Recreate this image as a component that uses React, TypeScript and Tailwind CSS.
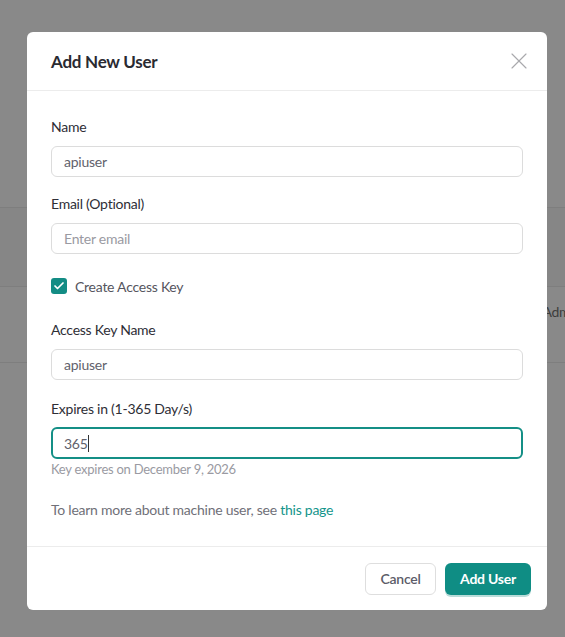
import React from 'react';
import { X, Check } from 'lucide-react';

const Field: React.FC<{ label: string; value?: string; placeholder?: string; focused?: boolean }> = ({ label, value, placeholder, focused }) => (
    <div className="flex flex-col">
        <label className="text-[14px] leading-5 text-[#2e2e36]">{label}</label>
        <div
            className={
                focused
                    ? 'mt-[8px] h-[32px] rounded-md border-2 border-[#148f86] px-[11px] flex items-center'
                    : 'mt-[9px] h-[31px] rounded-md border border-[#dcdcdc] px-3 flex items-center'
            }
        >
            {value ? (
                <span className="text-[14px] text-[#62626c]">
                    {value}
                    {focused && <span className="inline-block w-px h-[17px] bg-[#333] align-middle -mt-[2px]"></span>}
                </span>
            ) : (
                <span className="text-[14px] text-[#9a9aa2]">{placeholder}</span>
            )}
        </div>
    </div>
);

export default function App() {
    return (
        <div className="relative w-[565px] h-[637px] overflow-hidden bg-[#898989] font-['Lato',sans-serif] tracking-[-0.25px]">
            {/* page behind the overlay */}
            <div className="flex flex-col">
                <div className="h-[207px]"></div>
                <div className="h-[79px] border-t border-[#7e7e7e] bg-[#868686]"></div>
                <div className="h-[76px] border-t border-[#7e7e7e] flex items-start justify-end pt-[15px]">
                    <span className="text-[14px] leading-5 text-[#3d3d3d] -mr-[16px]">Admin</span>
                </div>
                <div className="border-t border-[#7e7e7e]"></div>
            </div>

            {/* Modal */}
            <div className="absolute left-[27px] top-[32px] w-[520px] h-[578px] bg-white rounded-md flex flex-col">
                <div className="h-[59px] px-6 flex items-center justify-between border-b border-[#ececec]">
                    <h2 className="text-[17px] font-bold text-[#2a2a31] mt-[1px]">Add New User</h2>
                    <X className="w-[28px] h-[28px] text-[#a9a9ad] -mr-[10px]" strokeWidth={1} />
                </div>

                <div className="flex-1 px-6 pt-[26px] flex flex-col">
                    <Field label="Name" value="apiuser" />
                    <div className="mt-[17px]">
                        <Field label="Email (Optional)" placeholder="Enter email" />
                    </div>
                    <div className="mt-[24px] flex items-center gap-[8px] h-4">
                        <span className="w-4 h-4 rounded-[3px] bg-[#138c84] flex items-center justify-center">
                            <Check className="w-3 h-3 text-white" strokeWidth={3.5} />
                        </span>
                        <span className="text-[14px] text-[#55555e]">Create Access Key</span>
                    </div>
                    <div className="mt-[26px]">
                        <Field label="Access Key Name" value="apiuser" />
                    </div>
                    <div className="mt-[19px]">
                        <Field label="Expires in (1-365 Day/s)" value="365" focused />
                    </div>
                    <p className="mt-[2px] text-[13px] leading-4 text-[#9a9aa2]">Key expires on December 9, 2026</p>
                    <p className="mt-[23px] text-[14px] leading-5 text-[#707078]">
                        To learn more about machine user, see <span className="text-[#14958b]">this page</span>
                    </p>
                </div>

                <div className="h-[64px] border-t border-[#ececec] px-4 flex items-center justify-end gap-[9px]">
                    <button className="h-[32px] w-[71px] rounded-md border border-[#dedede] text-[14px] font-semibold text-[#5c5c68]">Cancel</button>
                    <button className="h-[32px] w-[86px] rounded-md bg-[#0f8d84] text-[14px] font-bold text-white shadow-[0_2px_0_#b9dcd9]">Add User</button>
                </div>
            </div>
        </div>
    );
}
